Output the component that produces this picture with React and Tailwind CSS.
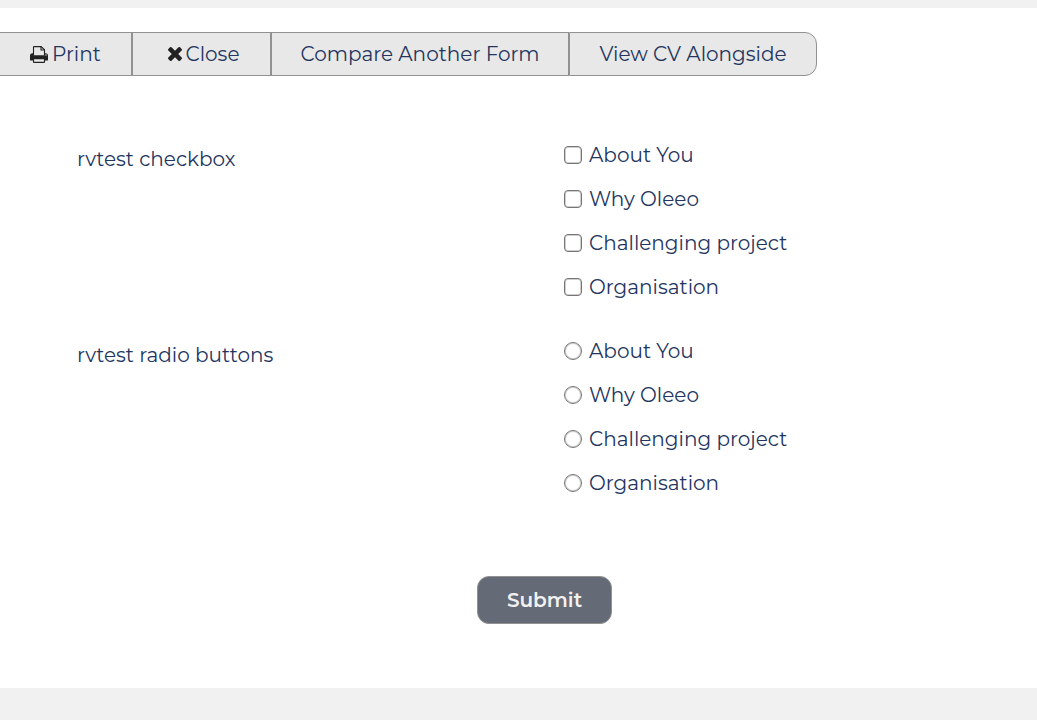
import React from 'react'

const options = ['About You', 'Why Oleeo', 'Challenging project', 'Organisation']

const questions = [
	{ id: 'checkbox', type: 'checkbox', title: 'rvtest checkbox' },
	{ id: 'radio', type: 'radio', title: 'rvtest radio buttons' }
]

function PrintIcon() {
	return (
		<svg className="w-[18px] h-[17px] text-[#222222]" viewBox="0 0 18 17" fill="none" stroke="currentColor" strokeWidth="1.1" aria-hidden="true">
			{/* paper */}
			<path d="M3.5 9V1.1Q3.5.6 4 .6H11.2L14.5 3.8V9" />
			<path d="M11 .6V4H14.5" />
			{/* body */}
			<path
				fill="currentColor"
				stroke="none"
				fillRule="evenodd"
				d="M2 7.3H3.6V9.2H14.4V7.3H16Q18 7.5 18 9.4V14Q18 14.4 17.6 14.4H15V12.9H3V14.4H.4Q0 14.4 0 14V9.4Q0 7.5 2 7.3ZM16 8.3A.7.7 0 1 0 16 9.7A.7.7 0 1 0 16 8.3Z"
			/>
			{/* tray */}
			<path d="M3.5 12.8V15.9Q3.5 16.4 4 16.4H14Q14.5 16.4 14.5 15.9V12.8Z" />
		</svg>
	)
}

function CloseIcon() {
	return (
		<svg className="size-[14px] text-[#222222]" viewBox="302 366 1188 1188" fill="currentColor" aria-hidden="true">
			<path d="M1490 1322q0 40-28 68l-136 136q-28 28-68 28t-68-28l-294-294-294 294q-28 28-68 28t-68-28l-136-136q-28-28-28-68t28-68l294-294-294-294q-28-28-28-68t28-68l136-136q28-28 68-28t68 28l294 294 294-294q28-28 68-28t68 28l136 136q28 28 28 68t-28 68l-294 294 294 294q28 28 28 68z" />
		</svg>
	)
}

function ToolbarButton({ className, children }) {
	return (
		<button
			type="button"
			className={`flex h-11 items-center justify-center gap-1 border border-[#919191] bg-[#e8e8e8] hover:bg-[#dcdcdc] whitespace-nowrap cursor-pointer ${className}`}
		>
			{children}
		</button>
	)
}

function Question({ question }) {
	return (
		<fieldset className="grid grid-cols-[487fr_473fr]" aria-labelledby={`${question.id}-title`}>
			<p id={`${question.id}-title`} className="pt-1">{question.title}</p>
			<div className="flex flex-col items-start gap-4">
				{options.map((option) => (
					<label key={option} className="flex items-center gap-[7px] leading-7">
						<input
							type={question.type}
							name={question.id}
							value={option}
							className={`size-[18px] appearance-none border border-[#767676] bg-white shadow-[inset_0_0_0_1px_#cfcfcf] checked:bg-[#23355f] ${question.type === 'radio' ? 'rounded-full' : 'rounded-sm'}`}
						/>
						{option}
					</label>
				))}
			</div>
		</fieldset>
	)
}

export default function App() {
	return (
		<div className="min-h-screen bg-[#f1f1f1] py-2 font-['Montserrat','Inter',sans-serif] text-[20px] leading-7 text-[#23355f]">
			<main className="bg-white pt-6 pb-16">
				<nav className="flex">
					<ToolbarButton className="w-[132px] border-l-0">
						<PrintIcon />
						Print
					</ToolbarButton>
					<ToolbarButton className="w-[139px] pl-1">
						<CloseIcon />
						Close
					</ToolbarButton>
					<ToolbarButton className="w-[298px]">Compare Another Form</ToolbarButton>
					<ToolbarButton className="w-[248px] rounded-r-xl">View CV Alongside</ToolbarButton>
				</nav>

				<form className="pt-[65px]" onSubmit={(e) => e.preventDefault()}>
					<div className="flex flex-col gap-9 pl-[77px]">
						{questions.map((question) => (
							<Question key={question.id} question={question} />
						))}
					</div>
					<div className="flex justify-center pt-[79px] pl-[52px]">
						<button
							type="submit"
							className="h-12 w-[135px] rounded-xl border border-[#919191] bg-[#646a76] font-semibold text-[#f1f1f1] cursor-pointer"
						>
							Submit
						</button>
					</div>
				</form>
			</main>
		</div>
	)
}
